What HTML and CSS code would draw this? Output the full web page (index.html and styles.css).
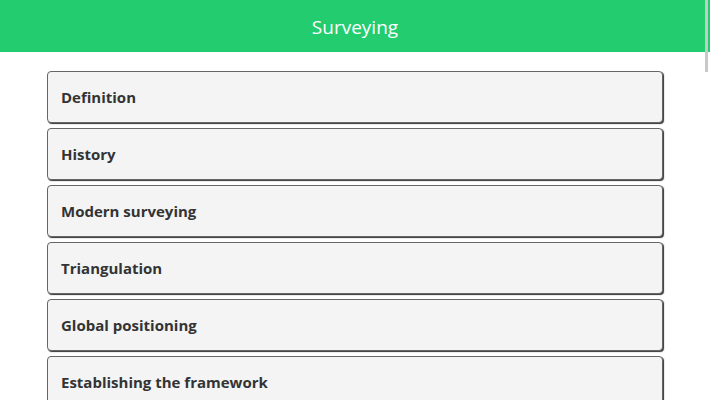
FILE: index.html
```html
<!DOCTYPE html>
<html>
<head>
<meta charset="utf-8">
<link rel="stylesheet" href="styles.css">
</head>
<body>
<header class="top">Surveying</header>
<main class="list">
  <div class="item">Definition</div>
  <div class="item">History</div>
  <div class="item">Modern surveying</div>
  <div class="item">Triangulation</div>
  <div class="item">Global positioning</div>
  <div class="item">Establishing the framework</div>
</main>
<div class="thumb"></div>
</body>
</html>
```
FILE: styles.css
```css
html, body {
  margin: 0;
  padding: 0;
  background: #fff;
  font-family: "Open Sans", sans-serif;
  overflow: hidden;
  height: 400px;
}
.top {
  height: 52px;
  background: #22cc6f;
  color: #fff;
  font-size: 19px;
  display: flex;
  align-items: center;
  justify-content: center;
  padding-top: 1px;
  box-sizing: border-box;
}
.list {
  width: 616px;
  margin: 19px auto 0;
  display: flex;
  flex-direction: column;
  gap: 5px;
}
.item {
  height: 52px;
  flex-shrink: 0;
  box-sizing: border-box;
  border: 1px solid #666;
  border-radius: 4px;
  box-shadow: 1px 1px 1px #333;
  background: #f4f4f4;
  color: #333;
  font-weight: 700;
  font-size: 15px;
  display: flex;
  align-items: center;
  padding-left: 13px;
}
.thumb {
  position: absolute;
  top: 0;
  right: 2px;
  width: 3px;
  height: 72px;
  background: #c8c8c8;
}
```
